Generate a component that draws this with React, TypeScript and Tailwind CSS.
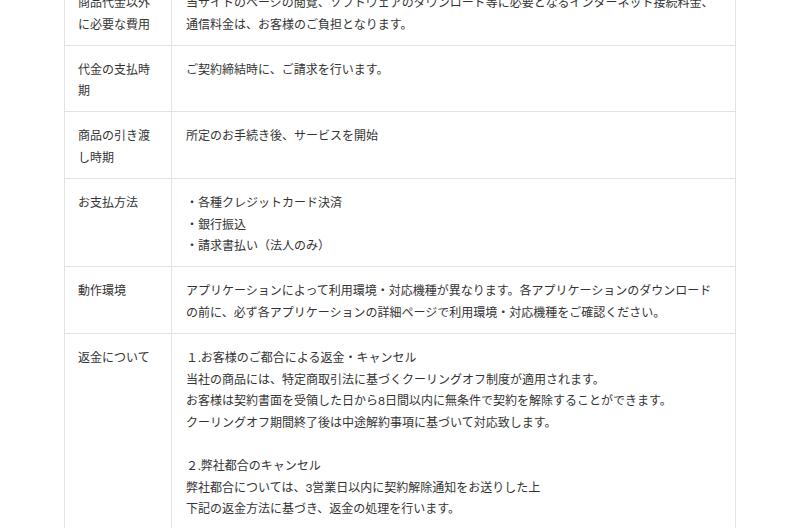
const rows: { label: string; lines: string[] }[] = [
  {
    label: '商品代金以外に必要な費用',
    lines: [
      '当サイトのページの閲覧、ソフトウェアのダウンロード等に必要となるインターネット接続料金、通信料金は、お客様のご負担となります。',
    ],
  },
  { label: '代金の支払時期', lines: ['ご契約締結時に、ご請求を行います。'] },
  { label: '商品の引き渡し時期', lines: ['所定のお手続き後、サービスを開始'] },
  {
    label: 'お支払方法',
    lines: ['・各種クレジットカード決済', '・銀行振込', '・請求書払い（法人のみ）'],
  },
  {
    label: '動作環境',
    lines: [
      'アプリケーションによって利用環境・対応機種が異なります。各アプリケーションのダウンロードの前に、必ず各アプリケーションの詳細ページで利用環境・対応機種をご確認ください。',
    ],
  },
  {
    label: '返金について',
    lines: [
      '１.お客様のご都合による返金・キャンセル',
      '当社の商品には、特定商取引法に基づくクーリングオフ制度が適用されます。',
      'お客様は契約書面を受領した日から8日間以内に無条件で契約を解除することができます。',
      'クーリングオフ期間終了後は中途解約事項に基づいて対応致します。',
      '',
      '２.弊社都合のキャンセル',
      '弊社都合については、3営業日以内に契約解除通知をお送りした上',
      '下記の返金方法に基づき、返金の処理を行います。',
    ],
  },
];

export default function App() {
  return (
    <div
      className="h-[528px] overflow-hidden bg-white text-[12px] leading-[1.8] text-[#333]"
      style={{ fontFamily: 'Lato, "Noto Sans CJK JP", sans-serif' }}
    >
      <div className="mx-16 -mt-[22px] border-x border-[#e3e3e3]">
        {rows.map((row) => (
          <div key={row.label} className="grid grid-cols-[107px_1fr] border-t border-[#e3e3e3]">
            <div className="border-r border-[#e3e3e3] px-[13px] pt-[13px] pb-[9.5px]">{row.label}</div>
            <div className="px-[14px] pt-[13px] pb-[9.5px]">
              {row.lines.map((line, i) => (
                <p key={i} className="min-h-[21.6px]">
                  {line}
                </p>
              ))}
            </div>
          </div>
        ))}
      </div>
    </div>
  );
}
